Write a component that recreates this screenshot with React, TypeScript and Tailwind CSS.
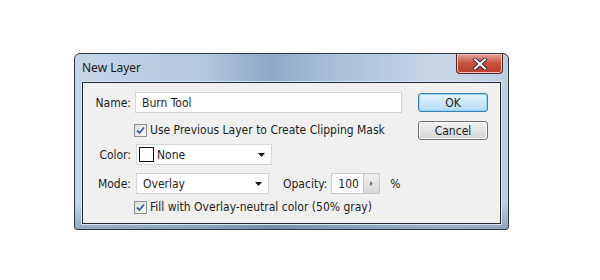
import React from "react";

const ui = "font-['DejaVu_Sans_Condensed','DejaVu_Sans',sans-serif] text-[12px] text-[#1e1e1e]";

function Check() {
  return (
    <span className="flex h-[13px] w-[13px] items-center justify-center border border-[#8e8f8f] bg-gradient-to-br from-[#dcdcdc] to-[#fbfbfb]">
      <svg width="9" height="9" viewBox="0 0 9 9">
        <path d="M1 4.5 L3.5 7 L8 1.5" fill="none" stroke="#3c5bb0" strokeWidth="1.8" />
      </svg>
    </span>
  );
}

function Caret() {
  return (
    <svg width="7" height="4" viewBox="0 0 7 4">
      <path d="M0 0 H7 L3.5 4 Z" fill="#111" />
    </svg>
  );
}

function Button({ label, primary }: { label: string; primary?: boolean }) {
  return (
    <button
      className={`flex h-[19px] w-[70px] items-center justify-center rounded-[3px] border ${
        primary
          ? "border-[#3c7fb1] bg-gradient-to-b from-[#e5f4fc] to-[#b2dcf4] shadow-[inset_0_0_0_1px_#8ed4f7]"
          : "border-[#707070] bg-gradient-to-b from-[#f2f2f2] to-[#d4d4d4] shadow-[inset_0_0_0_1px_#fcfcfc]"
      } ${ui}`}
    >
      {label}
    </button>
  );
}

export default function App() {
  return (
    <div className="h-[280px] w-[600px] bg-white pl-[74px] pt-[53px]">
      <div className="flex h-[177px] w-[435px] flex-col rounded-t-[6px] rounded-b-[3px] border border-[#2f3a45] bg-[linear-gradient(180deg,rgba(255,255,255,0)_0%,rgba(255,255,255,0)_85%,rgba(60,85,115,0.35)_100%),linear-gradient(90deg,#c5d5e6_0%,#b4c8dd_30%,#8ea8c6_45%,#a9c0d8_60%,#c9d8e8_85%,#bccde0_100%)]">
        {/* title bar */}
        <div className="flex h-[28px] items-start justify-between pl-[7px]">
          <span className="pt-[5px] font-['Noto_Sans',sans-serif] text-[12px] text-[#1a1a1a]">New Layer</span>
          <div className="mr-[5px] flex h-[20px] w-[47px] items-center justify-center rounded-b-[4px] border border-t-0 border-[#5a2a22] bg-gradient-to-b from-[#e0a59a] via-[#c6503c] to-[#b8402c] shadow-[inset_0_0_0_1px_#ecc0b6]">
            <svg width="14" height="12" viewBox="0 0 14 12">
              <path
                d="M2 1.5 L12 10.5 M12 1.5 L2 10.5"
                stroke="#3a2320"
                strokeWidth="4"
                strokeLinecap="round"
              />
              <path
                d="M2 1.5 L12 10.5 M12 1.5 L2 10.5"
                stroke="#ffffff"
                strokeWidth="2.2"
                strokeLinecap="round"
              />
            </svg>
          </div>
        </div>

        {/* content panel */}
        <div className="mx-[7px] mb-[5px] flex flex-1 border border-[#1f2a35] bg-[#f0f0f0] shadow-[0_0_0_1px_#d9e4ef]">
          <div className={`flex flex-col pt-[9px] ${ui}`}>
            <div className="flex items-center">
              <span className="w-[48px] text-right">Name:</span>
              <div className="ml-[4px] flex h-[21px] w-[267px] items-center border border-[#d5d5d5] bg-white pl-[6px]">
                Burn Tool
              </div>
            </div>

            <div className="ml-[51px] mt-[8px] flex items-center gap-[3px]">
              <Check />
              <span>Use Previous Layer to Create Clipping Mask</span>
            </div>

            <div className="mt-[5px] flex items-center">
              <span className="w-[48px] text-right">Color:</span>
              <div className="ml-[5px] flex h-[21px] w-[136px] items-center border border-[#d5d5d5] bg-white pl-[2px] pr-[6px]">
                <span className="h-[15px] w-[15px] border border-[#111] bg-white" />
                <span className="ml-[3px] flex-1">None</span>
                <Caret />
              </div>
            </div>

            <div className="mt-[8px] flex items-center">
              <span className="w-[48px] text-right">Mode:</span>
              <div className="ml-[5px] flex h-[21px] w-[133px] items-center border border-[#d5d5d5] bg-white pl-[6px] pr-[6px]">
                <span className="flex-1">Overlay</span>
                <Caret />
              </div>
              <span className="ml-[14px]">Opacity:</span>
              <div className="ml-[4px] flex h-[21px] items-stretch border border-[#c8c8c8] bg-white">
                <span className="flex w-[31px] items-center pl-[6px]">100</span>
                <span className="flex w-[16px] items-center justify-center border-l border-[#c8c8c8] bg-gradient-to-b from-[#f0f0f0] to-[#d8d8d8]">
                  <svg width="3" height="5" viewBox="0 0 3 5">
                    <path d="M0 0 L3 2.5 L0 5 Z" fill="#777" />
                  </svg>
                </span>
              </div>
              <span className="ml-[10px]">%</span>
            </div>

            <div className="ml-[51px] mt-[4px] flex items-center gap-[3px]">
              <Check />
              <span>Fill with Overlay-neutral color (50% gray)</span>
            </div>
          </div>

          <div className="ml-auto mr-[12px] flex flex-col gap-[9px] pt-[10px]">
            <Button label="OK" primary />
            <Button label="Cancel" />
          </div>
        </div>
      </div>
    </div>
  );
}
